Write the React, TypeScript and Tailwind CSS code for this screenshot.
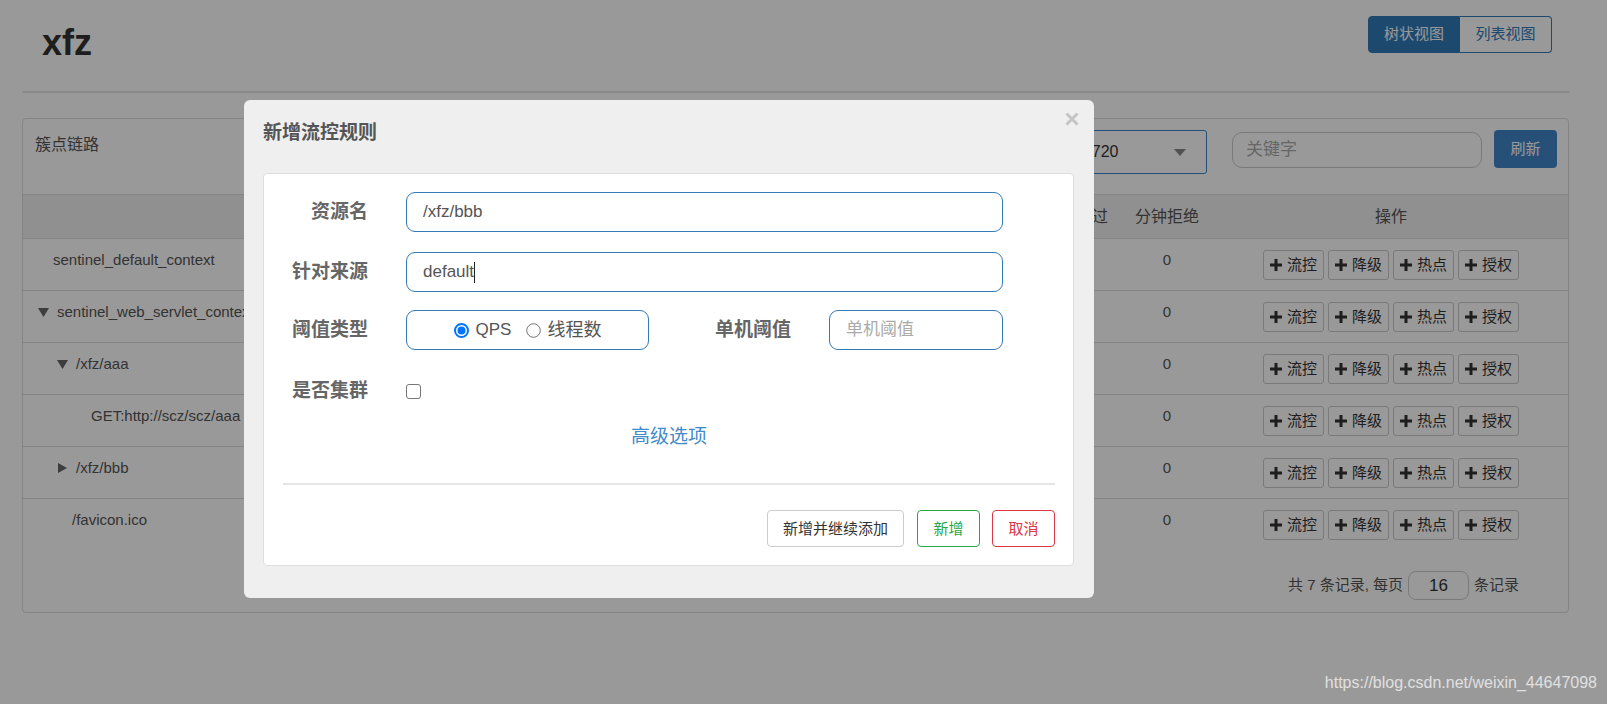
import React from "react";

const FONT = "font-['Liberation_Sans','Noto_Sans_CJK_SC',sans-serif]";

function Plus() {
  return (
    <svg width="12" height="12" viewBox="0 0 12 12" className="shrink-0">
      <path d="M4.5 0h3v4.5H12v3H7.5V12h-3V7.5H0v-3h4.5z" fill="#333" />
    </svg>
  );
}

function TriDown() {
  return (
    <svg width="11" height="9" viewBox="0 0 11 9">
      <path d="M0 0h11L5.5 9z" fill="#666" />
    </svg>
  );
}

function TriRight() {
  return (
    <svg width="9" height="10" viewBox="0 0 9 10">
      <path d="M0 0l9 5-9 5z" fill="#666" />
    </svg>
  );
}

type Row = { pl: number; icon: "down" | "right" | null; label: string };

const rows: Row[] = [
  { pl: 30, icon: null, label: "sentinel_default_context" },
  { pl: 15, icon: "down", label: "sentinel_web_servlet_context" },
  { pl: 34, icon: "down", label: "/xfz/aaa" },
  { pl: 68, icon: null, label: "GET:http://scz/scz/aaa" },
  { pl: 34, icon: "right", label: "/xfz/bbb" },
  { pl: 49, icon: null, label: "/favicon.ico" },
];

const GRID = "grid grid-cols-[1fr_80px_80px_80px_80px_88px_94px_354px]";

function ActionButton({ text }: { text: string }) {
  return (
    <div className="flex h-[30px] w-[61px] items-center justify-center gap-[5px] rounded-[3px] border border-[#ccc] bg-white text-[15px] leading-[20px] text-[#333]">
      <Plus />
      <span>{text}</span>
    </div>
  );
}

export default function App() {
  return (
    <div className={`relative h-[704px] w-full overflow-hidden bg-white ${FONT}`}>
      {/* page */}
      <div className="ml-[22px] w-[1548px]">
        <div className="flex h-[93px] items-start justify-between border-b-2 border-[#e6e6e6] pl-[20px] pr-[18px]">
          <div className="mt-[23px] text-[36px] font-bold leading-[40px] text-[#333]">xfz</div>
          <div className="mt-[16px] flex">
            <div className="flex h-[37px] w-[92px] items-center justify-center rounded-l-[4px] border border-[#337ab7] bg-[#337ab7] text-[15px] text-white">
              树状视图
            </div>
            <div className="flex h-[37px] w-[92px] items-center justify-center rounded-r-[4px] border border-l-0 border-[#337ab7] bg-white text-[15px] text-[#337ab7]">
              列表视图
            </div>
          </div>
        </div>

        <div className="mt-[25px] w-[1547px] rounded-[4px] border border-[#ddd]">
          <div className="flex h-[76px] items-start justify-between border-b border-[#ddd] pl-[12px] pr-[11px]">
            <div className="mt-[16px] text-[16px] leading-[20px] text-[#555]">簇点链路</div>
            <div className="flex items-start">
              <div className="mt-[11px] flex h-[44px] w-[230px] items-center justify-between rounded-[3px] border border-[#3a84c8] bg-white pl-[7px] pr-[20px] text-[16px] text-[#333]">
                <span>192.168.1.10:8720</span>
                <svg width="12" height="7" viewBox="0 0 12 7">
                  <path d="M0 0h12L6 7z" fill="#888" />
                </svg>
              </div>
              <div className="ml-[25px] mt-[13px] flex h-[36px] w-[250px] items-center rounded-[10px] border border-[#ccc] bg-white pl-[13px] text-[17px] text-[#aaa]">
                关键字
              </div>
              <div className="ml-[12px] mt-[11px] flex h-[38px] w-[63px] items-center justify-center rounded-[4px] bg-[#4286c8] text-[15px] text-white">
                刷新
              </div>
            </div>
          </div>

          <div className={`${GRID} h-[43px] items-center bg-[#f0f0f0] text-[16px] text-[#555]`}>
            <div />
            <div />
            <div />
            <div />
            <div />
            <div className="text-center">分钟通过</div>
            <div className="text-center">分钟拒绝</div>
            <div className="text-center">操作</div>
          </div>

          {rows.map((r, i) => (
            <div key={i} className={`${GRID} h-[52px] border-t border-[#ddd] text-[15px] leading-[20px] text-[#555]`}>
              <div className="flex items-start overflow-hidden pt-[11px]" style={{ paddingLeft: r.pl }}>
                {r.icon && (
                  <span className="flex h-[20px] w-[19px] shrink-0 items-center">
                    {r.icon === "down" ? (
                      <TriDown />
                    ) : (
                      <span className="ml-[1px] flex">
                        <TriRight />
                      </span>
                    )}
                  </span>
                )}
                <span className="whitespace-nowrap">{r.label}</span>
              </div>
              <div />
              <div />
              <div />
              <div />
              <div />
              <div className="pt-[11px] text-center">0</div>
              <div className="flex items-center justify-center gap-[4px]">
                <ActionButton text="流控" />
                <ActionButton text="降级" />
                <ActionButton text="热点" />
                <ActionButton text="授权" />
              </div>
            </div>
          ))}

          <div className="flex h-[62px] items-start justify-end pr-[49px] pt-[21px] text-[15px] text-[#555]">
            <div className="flex h-[29px] items-center">
              <span>共 7 条记录, 每页</span>
              <div className="ml-[5px] flex h-[29px] w-[61px] items-center justify-center rounded-[8px] border border-[#ccc] bg-white text-[17px] text-[#333]">
                16
              </div>
              <span className="ml-[5px]">条记录</span>
            </div>
          </div>
        </div>
      </div>

      {/* backdrop */}
      <div className="absolute inset-0 bg-black/40" />

      {/* modal */}
      <div className="absolute left-[244px] top-[100px] flex h-[498px] w-[850px] flex-col rounded-[6px] bg-[#efefef] pl-[19px] pr-[20px]">
        <svg className="absolute right-[15px] top-[12px]" width="14" height="14" viewBox="0 0 14 14">
          <path d="M1.5 1.5l11 11M12.5 1.5l-11 11" stroke="#c4c4c4" strokeWidth="3" />
        </svg>
        <div className="h-[73px] pt-[20px] text-[19px] font-bold leading-[26px] text-[#555]">新增流控规则</div>
        <div className="flex h-[393px] flex-col rounded-[4px] border border-[#ddd] bg-white pb-[18px] pl-[19px] pr-[18px] pt-[18px]">
          {/* row 1 */}
          <div className="flex h-[40px] items-center">
            <div className="w-[85px] text-right text-[19px] font-bold text-[#666]">资源名</div>
            <div className="ml-[38px] flex h-[40px] w-[597px] items-center rounded-[9px] border border-[#337ab7] pl-[16px] text-[17px] text-[#555]">
              /xfz/bbb
            </div>
          </div>
          {/* row 2 */}
          <div className="mt-[20px] flex h-[40px] items-center">
            <div className="w-[85px] text-right text-[19px] font-bold text-[#666]">针对来源</div>
            <div className="ml-[38px] flex h-[40px] w-[597px] items-center rounded-[9px] border border-[#337ab7] pl-[16px] text-[17px] text-[#555]">
              <span>default</span>
              <span className="h-[21px] w-px bg-[#222]" />
            </div>
          </div>
          {/* row 3 */}
          <div className="mt-[18px] flex h-[40px] items-center">
            <div className="w-[85px] text-right text-[19px] font-bold text-[#666]">阈值类型</div>
            <div className="ml-[38px] flex h-[40px] w-[243px] items-center justify-center rounded-[9px] border border-[#337ab7] text-[17px] text-[#555]">
              <svg width="15" height="15" viewBox="0 0 15 15">
                <circle cx="7.5" cy="7.5" r="6.5" fill="#fff" stroke="#0075ff" strokeWidth="2" />
                <circle cx="7.5" cy="7.5" r="4" fill="#0075ff" />
              </svg>
              <span className="ml-[7px]">QPS</span>
              <svg className="ml-[15px]" width="15" height="15" viewBox="0 0 15 15">
                <circle cx="7.5" cy="7.5" r="6.8" fill="#fff" stroke="#767676" strokeWidth="1" />
              </svg>
              <span className="ml-[6px] text-[18px]">线程数</span>
            </div>
            <div className="ml-[37px] w-[105px] text-right text-[19px] font-bold text-[#666]">单机阈值</div>
            <div className="ml-[38px] flex h-[40px] w-[174px] items-center rounded-[9px] border border-[#337ab7] pl-[16px] text-[17px] text-[#aaa]">
              单机阈值
            </div>
          </div>
          {/* row 4 */}
          <div className="mt-[21px] flex h-[40px] items-center">
            <div className="w-[85px] text-right text-[19px] font-bold text-[#666]">是否集群</div>
            <div className="ml-[38px] h-[15px] w-[15px] rounded-[3px] border border-[#767676] bg-white" />
          </div>
          <div className="mt-[13px] text-center text-[19px] leading-[26px] text-[#428bca]">高级选项</div>
          <div className="mt-[33px] h-[2px] bg-[#e5e5e5]" />
          <div className="mt-[25px] flex justify-end text-[15px] leading-[20px]">
            <div className="flex h-[37px] w-[137px] items-center justify-center whitespace-nowrap rounded-[4px] border border-[#ccc] bg-white text-[#333]">
              新增并继续添加
            </div>
            <div className="ml-[13px] flex h-[37px] w-[63px] items-center justify-center rounded-[4px] border border-[#28a745] bg-white text-[#28a745]">
              新增
            </div>
            <div className="ml-[12px] flex h-[37px] w-[63px] items-center justify-center rounded-[4px] border border-[#dc3545] bg-white text-[#dc3545]">
              取消
            </div>
          </div>
        </div>
      </div>

      {/* watermark */}
      <div className="absolute bottom-[11px] right-[10px] text-[16px] leading-[20px] text-[#e0e0e0]">
        https://blog.csdn.net/weixin_44647098
      </div>
    </div>
  );
}
